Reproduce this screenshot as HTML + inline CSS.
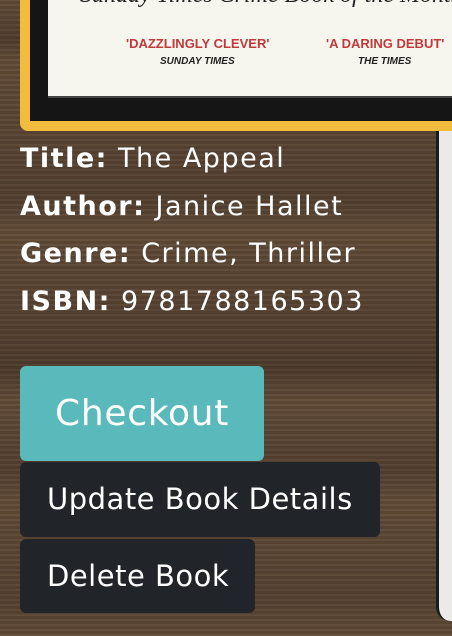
<!DOCTYPE html>
<html><head><style>
html,body{margin:0;padding:0}
body{width:452px;height:636px;overflow:hidden;position:relative;font-family:"DejaVu Sans",sans-serif;
background:#614a37;
background-image:
linear-gradient(180deg,rgba(0,0,0,0) 0,rgba(0,0,0,.18) 40px,rgba(0,0,0,0) 60px,rgba(0,0,0,.15) 200px,rgba(0,0,0,0) 230px,rgba(0,0,0,.2) 370px,rgba(0,0,0,0) 400px,rgba(0,0,0,.15) 470px,rgba(0,0,0,0) 500px,rgba(0,0,0,.12) 600px,rgba(0,0,0,0) 636px),
repeating-linear-gradient(0deg,rgba(255,255,255,.04) 0 2px,rgba(0,0,0,.06) 2px 5px);}
.frame{position:absolute;left:20px;top:-10px;width:460px;height:141px;background:#f2bd3e;border-radius:8px;}
.inner{position:absolute;left:30px;top:-10px;width:440px;height:131px;background:#151515;}
.cover{position:absolute;left:48px;top:-10px;width:420px;height:106px;background:#f7f6ee;border-bottom:2px solid #444;}
.cover .l1{position:absolute;left:32px;font-style:italic;font-family:"Liberation Serif",serif;font-size:24px;color:#222;white-space:nowrap;top:-8px}
.q{position:absolute;font-family:"Liberation Sans",sans-serif;font-weight:bold;font-size:13px;color:#c0393b;white-space:nowrap;top:46px}
.s{position:absolute;font-family:"Liberation Sans",sans-serif;font-style:italic;font-size:10px;color:#222;white-space:nowrap;top:66px;font-weight:bold}
.info{position:absolute;left:20px;top:135px;color:#fff;font-size:27px;line-height:47.5px;letter-spacing:1.5px;white-space:nowrap}
.btn{position:absolute;left:20px;border-radius:6px;color:#fff;box-sizing:border-box;white-space:nowrap}
.c{top:366px;width:244px;height:95px;background:#59b9bb;font-size:36px;line-height:95px;padding-left:35px;letter-spacing:.7px}
.u{top:462px;width:360px;height:75px;background:#212529;font-size:29px;line-height:75px;padding-left:27px;letter-spacing:.5px}
.d{top:539px;width:235px;height:74px;background:#212529;font-size:29px;line-height:74px;padding-left:27px;letter-spacing:.5px}
.paper{position:absolute;left:436px;top:131px;width:30px;height:490px;background:#ebeae8;border-left:3px solid #14201a;border-bottom-left-radius:14px}
</style></head><body>
<div class="frame"></div><div class="inner"></div>
<div class="cover"><div class="l1">Sunday Times Crime Book of the Month</div>
<div class="q" style="left:78px">'DAZZLINGLY CLEVER'</div>
<div class="q" style="left:278px">'A DARING DEBUT'</div>
<div class="s" style="left:112px">SUNDAY TIMES</div>
<div class="s" style="left:310px">THE TIMES</div></div>
<div class="paper"></div>
<div class="info"><div><b>Title:</b> The Appeal</div><div><b>Author:</b> Janice Hallet</div><div><b>Genre:</b> Crime, Thriller</div><div><b>ISBN:</b> 9781788165303</div></div>
<div class="btn c">Checkout</div>
<div class="btn u">Update Book Details</div>
<div class="btn d">Delete Book</div>
</body></html>
